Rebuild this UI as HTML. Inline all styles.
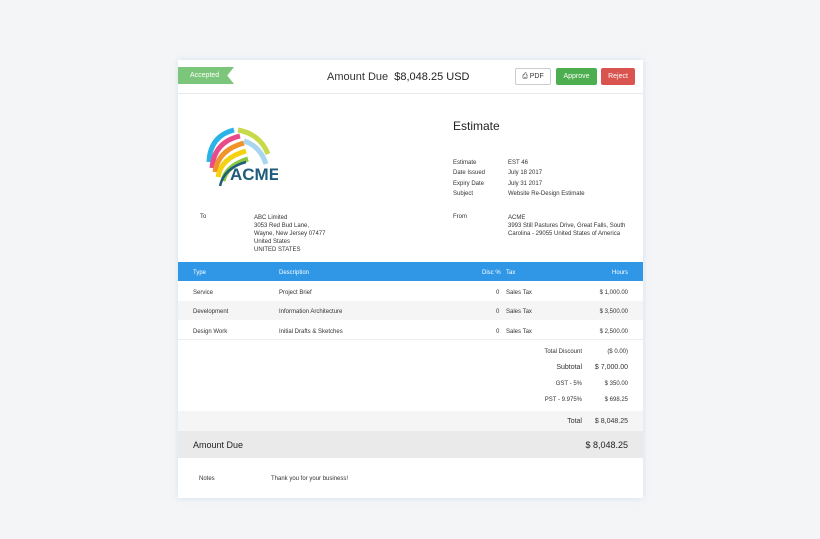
<!DOCTYPE html>
<html><head><style>
*{margin:0;padding:0;box-sizing:border-box}
body{width:820px;height:539px;background:#f4f5f7;font-family:"Liberation Sans",sans-serif;position:relative;overflow:hidden;color:#333}
.card{position:absolute;left:178px;top:60px;width:465px;height:438px;background:#fff;box-shadow:0 0 6px rgba(150,190,230,.35)}
.a{position:absolute;white-space:nowrap}
.s{font-size:6px;color:#333}
.btn{position:absolute;top:8px;height:17px;border-radius:2px;font-size:7px;text-align:center;line-height:18px}
</style></head><body>
<div class="card">
 <div class="a" style="left:0;top:0;width:465px;height:34px;border-bottom:1px solid #e6e9ee"></div>
 <div class="a" style="left:0;top:7px;width:56px;height:17px;background:#7cc67c;clip-path:polygon(0 0,100% 0,88% 50%,100% 100%,0 100%);color:#fff;font-size:7px;line-height:18px;padding-left:12px">Accepted</div>
 <div class="a" style="left:149px;top:11px;font-size:11px;color:#333">Amount Due &nbsp;<span style="font-size:11px;color:#222">$8,048.25 USD</span></div>
 <div class="btn" style="left:337px;width:36px;border:1px solid #ccc;color:#333;line-height:16px">&#9113; PDF</div>
 <div class="btn" style="left:378px;width:41px;background:#4cae4f;color:#fff">Approve</div>
 <div class="btn" style="left:423px;width:34px;background:#d9534f;color:#fff">Reject</div>

 <svg class="a" style="left:26px;top:64px" width="74" height="68" viewBox="0 0 74 68">
  <g fill="none" stroke-width="5" stroke-linecap="butt">
   <path d="M5 38 Q6 12 30 6" stroke="#2bb3e8"/>
   <path d="M8 44 Q10 18 36 12" stroke="#e94b8a"/>
   <path d="M11 48 Q14 26 40 19" stroke="#f0932b"/>
   <path d="M14 53 Q17 34 42 27" stroke="#f5d20e"/>
   <path d="M19 57 Q22 42 44 35" stroke="#8cc63f"/>
   <path d="M34 6 Q56 10 64 30" stroke="#c8d94a"/>
   <path d="M40 17 Q56 22 62 40" stroke="#a7d6ee"/>
  </g>
  <path d="M16 62 Q20 44 42 38" stroke="#1f5c7a" stroke-width="2.5" fill="none"/>
  <text x="26" y="56" font-family="Liberation Sans,sans-serif" font-size="17" font-weight="bold" fill="#1f5c7a">ACME</text>
 </svg>

 <div class="a" style="left:275px;top:59px;font-size:12px;color:#222">Estimate</div>
 <div class="a s" style="left:275px;top:98px;line-height:10.3px">Estimate<br>Date Issued<br>Expiry Date<br>Subject</div>
 <div class="a s" style="left:330px;top:98px;line-height:10.3px">EST 46<br>July 18 2017<br>July 31 2017<br>Website Re-Design Estimate</div>
 <div class="a s" style="left:22px;top:154px">To</div>
 <div class="a s" style="left:76px;top:154px;line-height:8.1px">ABC Limited<br>3053 Red Bud Lane,<br>Wayne, New Jersey 07477<br>United States<br>UNITED STATES</div>
 <div class="a s" style="left:275px;top:154px">From</div>
 <div class="a s" style="left:330px;top:154px;line-height:8.1px">ACME<br>3993 Still Pastures Drive, Great Falls, South<br>Carolina - 29055 United States of America</div>

 <div class="a" style="left:0;top:202px;width:465px;height:19px;background:#2f97e6"></div>
 <div class="a s" style="left:15px;top:210px;color:#fff">Type</div>
 <div class="a s" style="left:101px;top:210px;color:#fff">Description</div>
 <div class="a s" style="left:304px;top:210px;color:#fff">Disc %</div>
 <div class="a s" style="left:328px;top:210px;color:#fff">Tax</div>
 <div class="a s" style="right:15px;top:210px;color:#fff">Hours</div>

 <div class="a" style="left:0;top:241px;width:465px;height:19px;background:#f5f5f5"></div>
 <div class="a" style="left:0;top:279px;width:465px;height:1px;background:#eee"></div>
 <div class="a s" style="left:15px;top:224px;line-height:19.4px">Service<br>Development<br>Design Work</div>
 <div class="a s" style="left:101px;top:224px;line-height:19.4px">Project Brief<br>Information Architecture<br>Initial Drafts &amp; Sketches</div>
 <div class="a s" style="left:318px;top:224px;line-height:19.4px">0<br>0<br>0</div>
 <div class="a s" style="left:328px;top:224px;line-height:19.4px">Sales Tax<br>Sales Tax<br>Sales Tax</div>
 <div class="a s" style="right:15px;top:224px;line-height:19.4px;text-align:right">$ 1,000.00<br>$ 3,500.00<br>$ 2,500.00</div>

 <div class="a s" style="right:61px;top:289px;text-align:right">Total Discount</div>
 <div class="a s" style="right:15px;top:289px">($ 0.00)</div>
 <div class="a" style="right:61px;top:304px;font-size:7px">Subtotal</div>
 <div class="a" style="right:15px;top:304px;font-size:7px">$ 7,000.00</div>
 <div class="a s" style="right:61px;top:321px">GST - 5%</div>
 <div class="a s" style="right:15px;top:321px">$ 350.00</div>
 <div class="a s" style="right:61px;top:337px">PST - 9.975%</div>
 <div class="a s" style="right:15px;top:337px">$ 698.25</div>

 <div class="a" style="left:0;top:351px;width:465px;height:20px;background:#f5f5f5"></div>
 <div class="a" style="right:61px;top:358px;font-size:7px">Total</div>
 <div class="a" style="right:15px;top:358px;font-size:7px">$ 8,048.25</div>
 <div class="a" style="left:0;top:371px;width:465px;height:27px;background:#ebeaeb"></div>
 <div class="a" style="left:15px;top:380px;font-size:9px;color:#222">Amount Due</div>
 <div class="a" style="right:15px;top:380px;font-size:9px;color:#222">$ 8,048.25</div>
 <div class="a s" style="left:21px;top:416px">Notes</div>
 <div class="a s" style="left:93px;top:416px">Thank you for your business!</div>
</div>
</body></html>
